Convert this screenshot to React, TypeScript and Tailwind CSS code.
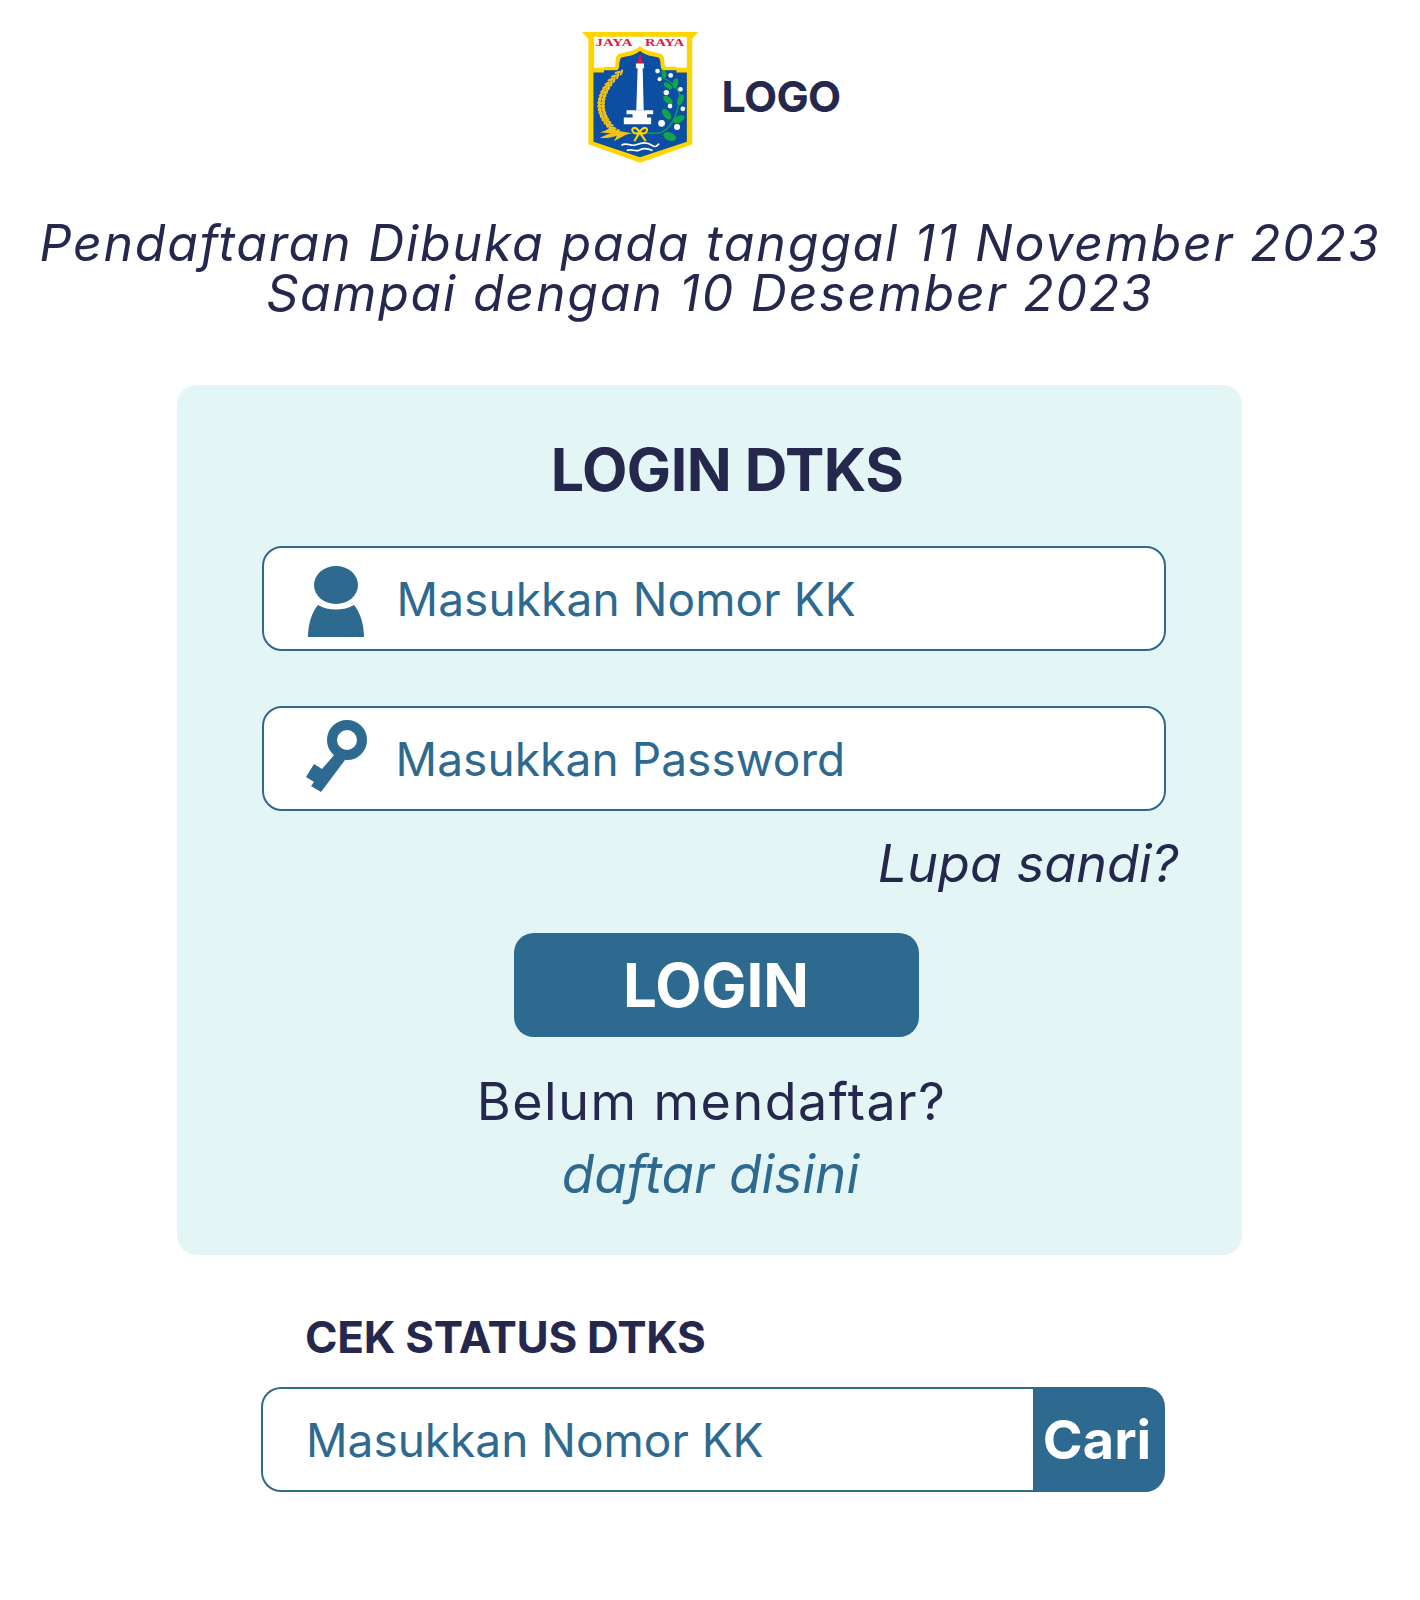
import React from "react";

const q = (t: number, a: number[], b: number[], c: number[]) => [
  (1 - t) * (1 - t) * a[0] + 2 * (1 - t) * t * b[0] + t * t * c[0],
  (1 - t) * (1 - t) * a[1] + 2 * (1 - t) * t * b[1] + t * t * c[1],
];

const grains = Array.from({ length: 18 }, (_, i) => i / 17);

const Wheat = () => {
  const a = [174, 172];
  const b = [72, 265];
  const c = [160, 346];
  return (
    <g fill="#F2C21A">
      <path d={`M${a[0]} ${a[1]}Q${b[0] + 14} ${b[1]} ${c[0]} ${c[1]}`} fill="none" stroke="#C99A10" strokeWidth="2" />
      {grains.map((t) => {
        const [x, y] = q(t, a, b, c);
        const [x2, y2] = q(Math.min(t + 0.03, 1), a, b, c);
        const ang = (Math.atan2(y2 - y, x2 - x) * 180) / Math.PI;
        return (
          <g key={t}>
            <ellipse cx={x - 3} cy={y} rx="10" ry="3.5" transform={`rotate(${ang + 28} ${x - 3} ${y})`} />
            <ellipse cx={x + 8} cy={y} rx="10" ry="3.5" transform={`rotate(${ang - 28} ${x + 8} ${y})`} />
          </g>
        );
      })}
      <path d="M150 335C165 345 190 350 215 352C190 357 178 368 160 376C165 368 166 364 168 360C150 366 135 368 118 366C132 360 142 356 150 352C136 352 126 350 118 350C132 346 142 342 150 335Z" />
    </g>
  );
};

const leaves: [number, number, number, number, number][] = [
  [325, 362, 20, 12, 22],
  [316, 296, 10, 19, -38],
  [352, 311, 10, 18, 62],
  [357, 253, 9, 17, 22],
  [320, 254, 9, 17, -50],
  [342, 205, 8, 15, 12],
  [320, 212, 7, 14, -55],
  [308, 176, 7, 12, -15],
];

const flowers: [number, number, number][] = [
  [289, 168, 7],
  [295, 192, 6],
  [328, 181, 7],
  [357, 222, 7],
  [315, 232, 8],
  [326, 272, 7],
  [364, 280, 7],
  [301, 323, 10],
  [347, 334, 9],
];

const Emblem = () => (
  <svg width="118" height="133" viewBox="62 50 350 393" className="block">
    <path d="M65 52H410L392 72V385L237 440L84 385V72Z" fill="#FFD500" />
    <path d="M101 66H376V158H101Z" fill="#fff" />
    <path d="M99 172H130V155H162C168 148 160 128 172 118C192 112 222 110 237 94C252 110 282 112 302 118C314 128 306 148 312 155H345V172H376V378L237 424L99 378Z" fill="#FFD500" />
    <path d="M99 172H130V166H170C180 155 172 138 182 128C200 124 224 122 237 108C250 122 274 124 292 128C302 138 294 155 304 166H345V172H376V378L237 424L99 378Z" fill="#0B4EA2" />
    <text x="105" y="93" textLength="110" lengthAdjust="spacingAndGlyphs" fontFamily="'Liberation Serif',serif" fontWeight="700" fontSize="30" fill="#E3173E">JAYA</text>
    <text x="252" y="93" textLength="116" lengthAdjust="spacingAndGlyphs" fontFamily="'Liberation Serif',serif" fontWeight="700" fontSize="30" fill="#E3173E">RAYA</text>
    <path d="M237 116L246 146H228Z" fill="#E3173E" />
    <path d="M225 146H249V160H245L248 284H226L230 160H225Z" fill="#fff" />
    <path d="M197 284H276V296H258V306H270V326H189V306H215V296H197Z" fill="#fff" />
    <Wheat />
    <path d="M215 352H290C325 350 350 300 355 240C350 215 325 195 298 185" fill="none" stroke="#12A54A" strokeWidth="4" />
    <g fill="#12A54A">
      {leaves.map(([x, y, rx, ry, r]) => (
        <ellipse key={`${x}-${y}`} cx={x} cy={y} rx={rx} ry={ry} transform={`rotate(${r} ${x} ${y})`} />
      ))}
    </g>
    <g fill="#fff">
      {flowers.map(([x, y, r]) => (
        <circle key={`${x}-${y}`} cx={x} cy={y} r={r} />
      ))}
    </g>
    <g fill="none" stroke="#FFD500" strokeWidth="6">
      <path d="M236 350C225 330 208 335 216 348C220 356 230 354 236 350C247 330 264 335 256 348C252 356 242 354 236 350ZM236 350L220 376M236 350L254 376" />
    </g>
    <g fill="none" stroke="#fff" strokeWidth="5">
      <path d="M182 388C200 378 210 394 228 386S258 378 272 388S286 388 294 384" />
      <path d="M198 404C212 396 222 410 236 402S262 398 274 404" />
    </g>
  </svg>
);

const UserIcon = () => (
  <svg width="56" height="72" viewBox="0 0 56 72" className="block shrink-0 mt-[6px]">
    <ellipse cx="28" cy="19" rx="22" ry="19" fill="#2E698F" />
    <path d="M10 39C20 45 36 45 46 39C52 46 56 58 56 71H0C0 58 4 46 10 39Z" fill="#2E698F" />
  </svg>
);

const KeyIcon = () => (
  <svg width="62" height="72" viewBox="0 0 62 72" className="block shrink-0 mb-[6px] ml-[-2px]">
    <circle cx="41" cy="20" r="15" fill="none" stroke="#2E698F" strokeWidth="10" />
    <path d="M29 34L39 40L15 72L5 66L8 62L0 57L8 44L16 49Z" fill="#2E698F" />
  </svg>
);

const Input = ({ icon, text, gap }: { icon: React.ReactNode; text: string; gap: string }) => (
  <div className={`flex items-center h-[105px] w-[904px] rounded-[20px] border-2 border-[#2E698F] bg-white pl-[44px] ${gap}`}>
    {icon}
    <span className="text-[#2E698F] text-[46px] leading-none tracking-[0.1px]">{text}</span>
  </div>
);

export default function App() {
  return (
    <div className="min-h-[1600px] bg-white flex flex-col items-center text-[#25274D] font-['Inter','Liberation_Sans',sans-serif]">
      <div className="flex items-center mt-[31px] ml-[1px] gap-[23px]">
        <Emblem />
        <span className="text-[43px] font-bold leading-none tracking-[-0.7px] mb-[3px]">LOGO</span>
      </div>
      <h1 className="mt-[54px] text-center italic font-normal text-[50px] leading-[50px] tracking-[1.8px]">
        Pendaftaran Dibuka pada tanggal 11 November 2023
        <br />
        Sampai dengan 10 Desember 2023
      </h1>
      <div className="mt-[67px] ml-[-1px] w-[1065px] h-[870px] rounded-[20px] bg-[#E3F5F5] flex flex-col items-center pt-[53px]">
        <h2 className="text-[59px] font-bold leading-[64px] ml-[35px] tracking-[-0.5px]">LOGIN DTKS</h2>
        <div className="mt-[44px] ml-[8px] flex flex-col gap-[55px]">
          <Input icon={<UserIcon />} text="Masukkan Nomor KK" gap="gap-[33px]" />
          <Input icon={<KeyIcon />} text="Masukkan Password" gap="gap-[28px]" />
        </div>
        <div className="w-[904px] text-right mt-[25px] mr-[-34px] italic text-[52px] leading-[56px] tracking-[0.1px]">Lupa sandi?</div>
        <button className="mt-[41px] w-[405px] h-[104px] rounded-[20px] bg-[#2E698F] text-white text-[60px] font-bold leading-none ml-[13px]">
          LOGIN
        </button>
        <div className="mt-[33px] text-[52px] leading-[64px] ml-[4px] tracking-[1.5px]">Belum mendaftar?</div>
        <div className="mt-[8px] text-[53px] leading-[64px] italic text-[#2E698F] ml-[2px]">daftar disini</div>
      </div>
      <div className="w-[904px] mt-[50px] ml-[6px]">
        <div className="ml-[44px] text-[44px] leading-[64px] font-bold tracking-[-0.3px]">CEK STATUS DTKS</div>
        <div className="mt-[18px] flex h-[105px] w-full">
          <div className="flex-1 flex items-center pl-[43px] rounded-l-[20px] border-2 border-r-0 border-[#2E698F] bg-white text-[#2E698F] text-[46px] leading-none">Masukkan Nomor KK</div>
          <div className="w-[132px] rounded-r-[20px] bg-[#2E698F] text-white text-[54px] font-bold flex items-center justify-center pr-[4px]">Cari</div>
        </div>
      </div>
    </div>
  );
}
